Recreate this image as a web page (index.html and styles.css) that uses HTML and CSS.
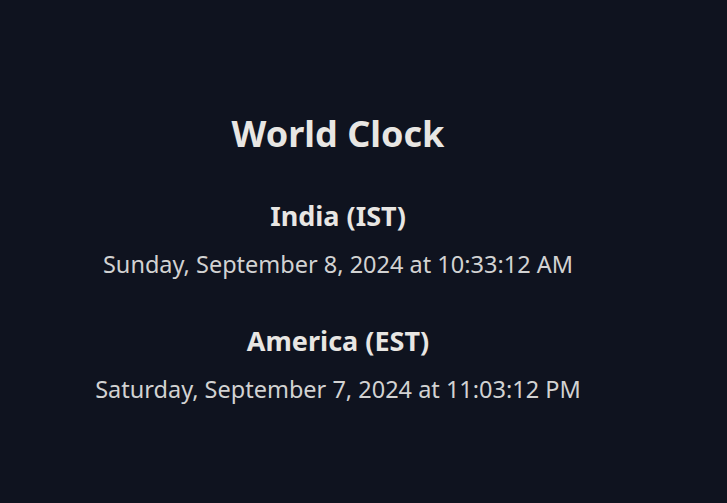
FILE: index.html
```html
<!DOCTYPE html>
<html>
<head>
<meta charset="utf-8">
<link rel="stylesheet" href="styles.css">
</head>
<body>
<main class="clock">
  <h1 class="title">World Clock</h1>
  <section class="zone">
    <h2 class="zone-name">India (IST)</h2>
    <p class="zone-time">Sunday, September 8, 2024 at 10:33:12 AM</p>
  </section>
  <section class="zone">
    <h2 class="zone-name">America (EST)</h2>
    <p class="zone-time">Saturday, September 7, 2024 at 11:03:12 PM</p>
  </section>
</main>
</body>
</html>
```
FILE: styles.css
```css
html, body {
  margin: 0;
  height: 100%;
  background: #0f131f;
}
body {
  font-family: "Noto Sans", sans-serif;
  color: #e8e6e3;
}
.clock {
  width: 676px;
  padding-top: 108px;
  text-align: center;
}
.title {
  margin: 0 0 40px;
  font-size: 36px;
  font-weight: 700;
  line-height: 52px;
}
.zone {
  margin-bottom: 45px;
}
.zone-name {
  margin: 0 0 16px;
  font-size: 27px;
  font-weight: 700;
  line-height: 32px;
}
.zone-time {
  margin: 0;
  font-size: 23.5px;
  line-height: 32px;
  color: #d2d2d2;
}
```
